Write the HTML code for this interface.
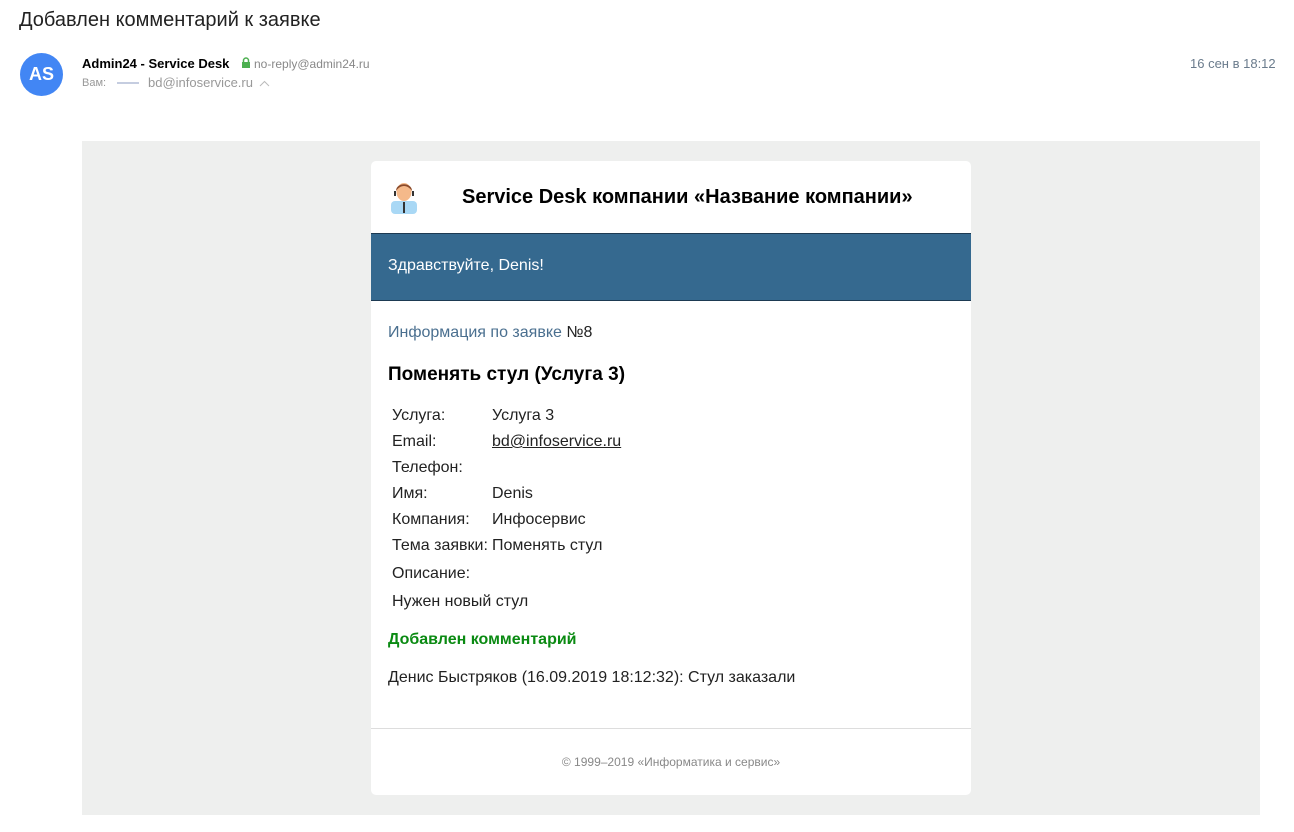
<!DOCTYPE html>
<html><head><meta charset="utf-8"><style>
body{margin:0;background:#fff;font-family:"Liberation Sans",Arial,sans-serif;width:1294px;height:832px;position:relative;overflow:hidden;color:#000}
.abs{position:absolute}
.card{position:absolute;left:371px;top:161px;width:600px;height:634px;background:#fff;border-radius:5px}
table td{padding:0;font-size:16px;height:26px;vertical-align:middle}
</style></head><body>
<div class="abs" style="left:19px;top:9px;font-size:20px;color:#222">Добавлен комментарий к заявке</div>
<div class="abs" style="left:20px;top:53px;width:43px;height:43px;border-radius:50%;background:#4286f4;color:#fff;font-weight:bold;font-size:18px;text-align:center;line-height:43px">AS</div>
<div class="abs" style="left:82px;top:56px;font-size:13px;font-weight:bold">Admin24 - Service Desk</div>
<svg class="abs" style="left:241px;top:57px" width="10" height="12"><path d="M2.5 5V3.5a2.5 2.5 0 0 1 5 0V5" stroke="#4caf50" stroke-width="1.5" fill="none"/><rect x="1" y="5" width="8" height="6" fill="#4caf50"/></svg>
<div class="abs" style="left:254px;top:57px;font-size:12px;color:#888">no-reply@admin24.ru</div>
<div class="abs" style="left:82px;top:77px;font-size:11px;color:#999">Вам:</div>
<div class="abs" style="left:117px;top:82px;width:22px;height:2px;background:#c5cde0"></div>
<div class="abs" style="left:148px;top:75px;font-size:13px;color:#999">bd@infoservice.ru</div>
<svg class="abs" style="left:259px;top:80px" width="11" height="7"><path d="M1 6l4.5-4.5L10 6" stroke="#bbb" fill="none"/></svg>
<div class="abs" style="left:1190px;top:56px;font-size:13px;color:#6a7b8c">16 сен в 18:12</div>
<div class="abs" style="left:82px;top:141px;width:1178px;height:674px;background:#eeefee"></div>
<div class="card">
<svg class="abs" style="left:17px;top:19px" width="32" height="34"><rect x="3" y="21" width="26" height="13" rx="4" fill="#a9d8f5"/><rect x="15" y="22" width="2" height="11" fill="#333"/><ellipse cx="16" cy="12" rx="7.5" ry="9" fill="#f5b98a"/><path d="M8 11c0-9 16-9 16 0c-2-3-5-5-8-5s-6 2-8 5z" fill="#8a4a2b"/><path d="M7 11v5M25 11v5" stroke="#333" stroke-width="2"/></svg>
<div class="abs" style="left:91px;top:25px;font-size:20px;font-weight:bold">Service Desk компании «Название компании»</div>
<div class="abs" style="left:0;top:72px;width:600px;height:66px;background:#35698f;border-top:1px solid #1d3a52;border-bottom:1px solid #1d3a52"></div>
<div class="abs" style="left:17px;top:96px;font-size:16px;color:#fff">Здравствуйте, Denis!</div>
<div class="abs" style="left:17px;top:163px;font-size:16px;color:#4a6f8f">Информация по заявке <span style="color:#222">№8</span></div>
<div class="abs" style="left:17px;top:203px;font-size:19px;font-weight:bold">Поменять стул (Услуга 3)</div>
<table class="abs" style="left:21px;top:242px;border-collapse:collapse;color:#222">
<tr><td style="width:100px">Услуга:</td><td>Услуга 3</td></tr>
<tr><td>Email:</td><td><u>bd@infoservice.ru</u></td></tr>
<tr><td>Телефон:</td><td></td></tr>
<tr><td>Имя:</td><td>Denis</td></tr>
<tr><td>Компания:</td><td>Инфосервис</td></tr>
<tr><td>Тема заявки:</td><td>Поменять стул</td></tr>
<tr><td style="height:30px">Описание:</td><td></td></tr>
<tr><td colspan="2">Нужен новый стул</td></tr>
</table>
<div class="abs" style="left:17px;top:470px;font-size:16px;font-weight:bold;color:#0a8a12">Добавлен комментарий</div>
<div class="abs" style="left:17px;top:508px;font-size:16px;color:#222">Денис Быстряков (16.09.2019 18:12:32): Стул заказали</div>
<div class="abs" style="left:0;top:567px;width:600px;height:1px;background:#ddd"></div>
<div class="abs" style="left:0;top:594px;width:600px;text-align:center;font-size:12px;color:#888">© 1999–2019 «Информатика и сервис»</div>
</div>
</body></html>
